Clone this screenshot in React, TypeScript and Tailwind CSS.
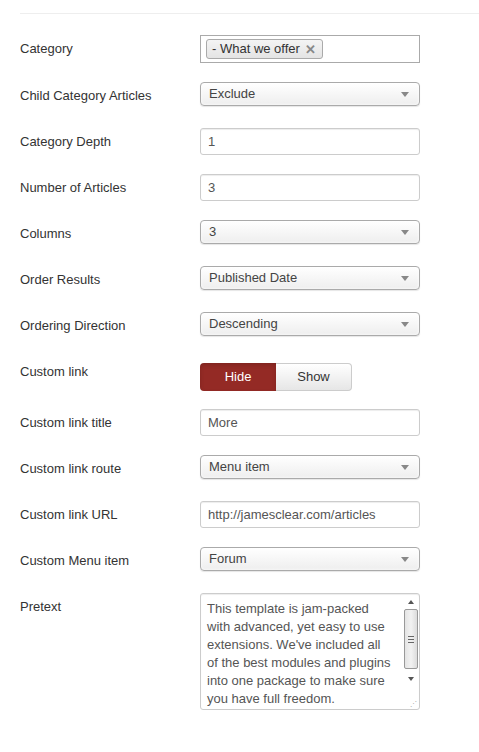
import React from "react";

const font = { fontFamily: '"Liberation Sans", Arial, sans-serif' };

const pretextLines = [
  "This template is jam-packed",
  "with advanced, yet easy to use",
  "extensions. We've included all",
  "of the best modules and plugins",
  "into one package to make sure",
  "you have full freedom.",
];

function Select({ value }: { value: string }) {
  return (
    <div className="flex h-[24px] w-[220px] items-center justify-between rounded-[4px] border border-[#aaa] bg-gradient-to-b from-white to-[#eee] pl-[8px] pr-[10px] text-[13px] text-[#444] shadow-[0_0_3px_#fff_inset,0_1px_1px_rgba(0,0,0,0.1)]">
      <span>{value}</span>
      <span className="h-0 w-0 border-x-[4px] border-t-[5px] border-x-transparent border-t-[#888]" />
    </div>
  );
}

function Input({ value }: { value: string }) {
  return (
    <div className="flex h-[27px] w-[220px] items-center rounded-[3px] border border-[#ccc] bg-white px-[7px] text-[13px] text-[#555] shadow-[inset_0_1px_1px_rgba(0,0,0,0.075)]">
      {value}
    </div>
  );
}

function Row({ label, h, labelPt = "pt-[5px]", children }: { label: string; h: string; labelPt?: string; children: React.ReactNode }) {
  return (
    <div className={`flex ${h}`}>
      <div className={`w-[180px] shrink-0 ${labelPt} text-[13px] leading-[18px] text-[#333]`}>{label}</div>
      <div>{children}</div>
    </div>
  );
}

export default function App() {
  return (
    <div className="min-h-[752px] w-[479px] bg-white pl-[20px]" style={font}>
      <div className="h-[14px] border-b border-[#eee]" />
      <div className="pt-[21px]">
        <Row label="Category" h="h-[47px]">
          <div className="flex h-[28px] w-[220px] items-center border border-[#aaa] bg-white px-[5px]">
            <span className="flex h-[20px] items-center gap-[5px] rounded-[3px] border border-[#aaa] bg-gradient-to-b from-[#f4f4f4] to-[#e4e4e4] pl-[5px] pr-[6px] text-[13px] text-[#333]">
              - What we offer
              <span className="text-[13px] font-bold leading-none text-[#888]">✕</span>
            </span>
          </div>
        </Row>
        <Row label="Child Category Articles" h="h-[46px]">
          <Select value="Exclude" />
        </Row>
        <Row label="Category Depth" h="h-[46px]">
          <Input value="1" />
        </Row>
        <Row label="Number of Articles" h="h-[46px]">
          <Input value="3" />
        </Row>
        <Row label="Columns" h="h-[46px]">
          <Select value="3" />
        </Row>
        <Row label="Order Results" h="h-[46px]">
          <Select value="Published Date" />
        </Row>
        <Row label="Ordering Direction" h="h-[46px]">
          <Select value="Descending" />
        </Row>
        <Row label="Custom link" h="h-[51px]">
          <div className="mt-[5px] flex h-[28px] text-[13px]">
            <div className="flex w-[76px] items-center justify-center rounded-l-[4px] bg-[#942a25] text-white shadow-[inset_0_2px_4px_rgba(0,0,0,0.15)]">Hide</div>
            <div className="flex w-[76px] items-center justify-center rounded-r-[4px] border border-l-0 border-[#ccc] bg-gradient-to-b from-white to-[#e6e6e6] text-[#333]">Show</div>
          </div>
        </Row>
        <Row label="Custom link title" h="h-[46px]">
          <Input value="More" />
        </Row>
        <Row label="Custom link route" h="h-[46px]">
          <Select value="Menu item" />
        </Row>
        <Row label="Custom link URL" h="h-[46px]">
          <Input value="http://jamesclear.com/articles" />
        </Row>
        <Row label="Custom Menu item" h="h-[46px]">
          <Select value="Forum" />
        </Row>
        <Row label="Pretext" h="h-[130px]">
          <div className="flex h-[117px] w-[220px] rounded-[3px] border border-[#ccc] bg-white shadow-[inset_0_1px_1px_rgba(0,0,0,0.075)]">
            <div className="flex-1 overflow-hidden whitespace-nowrap pl-[6px] pt-[6px] text-[13px] leading-[18px] text-[#555]">
              {pretextLines.map((l) => (
                <div key={l}>{l}</div>
              ))}
            </div>
            <div className="flex w-[17px] flex-col items-center pt-[3px]">
              <span className="mt-[3px] h-0 w-0 border-x-[3px] border-b-[4px] border-x-transparent border-b-[#555]" />
              <div className="mt-[5px] flex h-[60px] w-[14px] flex-col items-center justify-center gap-[2px] rounded-[2px] border border-[#999] bg-gradient-to-r from-[#e4e4e4] via-[#f2f2f2] to-[#dcdcdc]">
                <span className="h-px w-[6px] bg-[#666]" />
                <span className="h-px w-[6px] bg-[#666]" />
                <span className="h-px w-[6px] bg-[#666]" />
              </div>
              <span className="mt-[8px] h-0 w-0 border-x-[3px] border-t-[4px] border-x-transparent border-t-[#555]" />
              <span className="mt-auto mb-[2px] self-end pr-[2px] text-[7px] leading-none text-[#aaa]">⋰</span>
            </div>
          </div>
        </Row>
      </div>
    </div>
  );
}
